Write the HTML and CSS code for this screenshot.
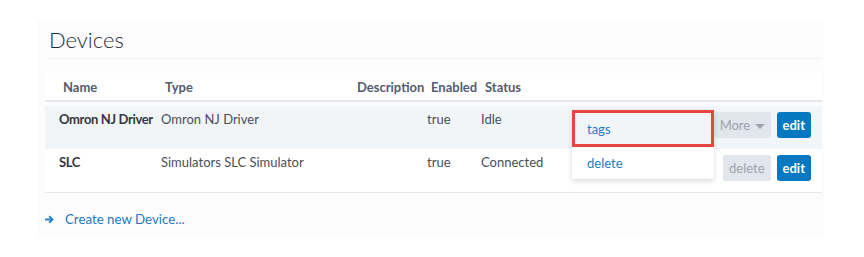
FILE: index.html
```html
<!DOCTYPE html>
<html lang="en">
<head>
  <meta charset="UTF-8" />
  <title>Devices</title>
  <link rel="stylesheet" href="styles.css">
</head>
<body>

<div class="panel">
  <h2 class="panel-title">Devices</h2>

  <table class="devices">
    <colgroup>
      <col class="col-name">
      <col class="col-type">
      <col class="col-desc">
      <col class="col-enabled">
      <col class="col-status">
      <col>
    </colgroup>
    <thead>
      <tr>
        <th>Name</th>
        <th>Type</th>
        <th>Description</th>
        <th>Enabled</th>
        <th>Status</th>
        <th></th>
      </tr>
    </thead>
    <tbody>
      <tr class="odd">
        <td class="name">Omron NJ Driver</td>
        <td>Omron NJ Driver</td>
        <td></td>
        <td>true</td>
        <td>Idle</td>
        <td class="actions">
          <div class="dropdown-menu">
            <a class="menu-item active" href="#">tags</a>
            <a class="menu-item" href="#">delete</a>
          </div>
          <div class="btn-group">
            <button class="btn btn-light">More <span class="caret"></span></button>
            <button class="btn btn-blue">edit</button>
          </div>
        </td>
      </tr>
      <tr>
        <td class="name">SLC</td>
        <td>Simulators SLC Simulator</td>
        <td></td>
        <td>true</td>
        <td>Connected</td>
        <td class="actions">
          <div class="btn-group">
            <button class="btn btn-light">delete</button>
            <button class="btn btn-blue">edit</button>
          </div>
        </td>
      </tr>
    </tbody>
  </table>

  <a class="create-link" href="#">
    <svg class="arrow" width="9" height="9" viewBox="0 0 9 9">
      <path d="M0 4.5H7.2M4.2 1.3L7.4 4.5L4.2 7.7" fill="none" stroke="#2a86d1" stroke-width="2"/>
    </svg>
    Create new Device...
  </a>
</div>

</body>
</html>
```

FILE: styles.css
```css
body {
  margin: 0;
  background: #fff;
  font-family: "Lato", "Open Sans", sans-serif;
  font-size: 13px;
  color: #4a4d5a;
}

.panel {
  margin: 20px 40px 0 37px;
  padding: 8px 2px 10px 8px;
  background: #fcfcfc;
  width: 777px;
}

.panel-title {
  margin: 0 0 14px 4px;
  padding: 0 0 6px;
  font-size: 22px;
  line-height: 24px;
  font-weight: 300;
  color: #262b38;
  border-bottom: 1px solid #eeeff1;
}

.devices {
  width: 777px;
  table-layout: fixed;
  border-collapse: separate;
  border-spacing: 0;
}

.col-name { width: 102px; }
.col-type { width: 192px; }
.col-desc { width: 74px; }
.col-enabled { width: 54px; }
.col-status { width: 90px; }

.devices th {
  text-align: left;
  font-weight: 700;
  color: #555b6c;
  background: #fff;
  padding: 6px 0 5px 18px;
  line-height: 16px;
  border-bottom: 2px solid #e3e9ef;
  white-space: nowrap;
}

.devices td {
  padding: 5px 0 11px 14px;
  line-height: 16px;
  vertical-align: top;
  white-space: nowrap;
  background: #fff;
  border-bottom: 1px solid #e3e9ef;
}

.devices tbody tr:first-child td {
  border-top: 4px solid #fcfcfc;
}

.devices tr.odd td {
  background: #f2f5f8;
  border-bottom: none;
}

.devices td.name {
  font-weight: 700;
  color: #333743;
  letter-spacing: -0.35px;
}

.devices td.actions {
  position: relative;
  text-align: right;
  padding: 6px 11px 11px 0;
}

.btn-group {
  display: inline-flex;
  gap: 6px;
}

.btn {
  font-family: inherit;
  font-size: 13px;
  height: 26px;
  border: none;
  border-radius: 3px;
  padding: 0 6px;
}

.btn-light {
  background: #e1e6ec;
  color: #9ba3ad;
}

.btn-blue {
  background: #0479c1;
  color: #fff;
  font-weight: 700;
}

.caret {
  display: inline-block;
  width: 0;
  height: 0;
  margin-left: 1px;
  vertical-align: middle;
  border-left: 5px solid transparent;
  border-right: 5px solid transparent;
  border-top: 5px solid #9ba3ad;
}

.dropdown-menu {
  position: absolute;
  top: 4px;
  left: 15px;
  width: 142px;
  background: #fff;
  border-radius: 2px;
  box-shadow: 0 2px 5px rgba(0, 0, 0, 0.15);
  text-align: left;
  z-index: 10;
}

.menu-item {
  display: block;
  padding: 8px 15px;
  color: #1a7cc5;
  text-decoration: none;
  line-height: 16px;
}

.menu-item.active {
  background: #f2f5f8;
  padding-top: 11px;
  height: 19px;
  padding-bottom: 7px;
  box-shadow: inset 0 0 0 3px #e8453f;
}

.create-link {
  display: inline-flex;
  align-items: center;
  gap: 11px;
  margin-top: 18px;
  line-height: 16px;
  color: #1d78c1;
  text-decoration: none;
  font-size: 13.3px;
}
```
